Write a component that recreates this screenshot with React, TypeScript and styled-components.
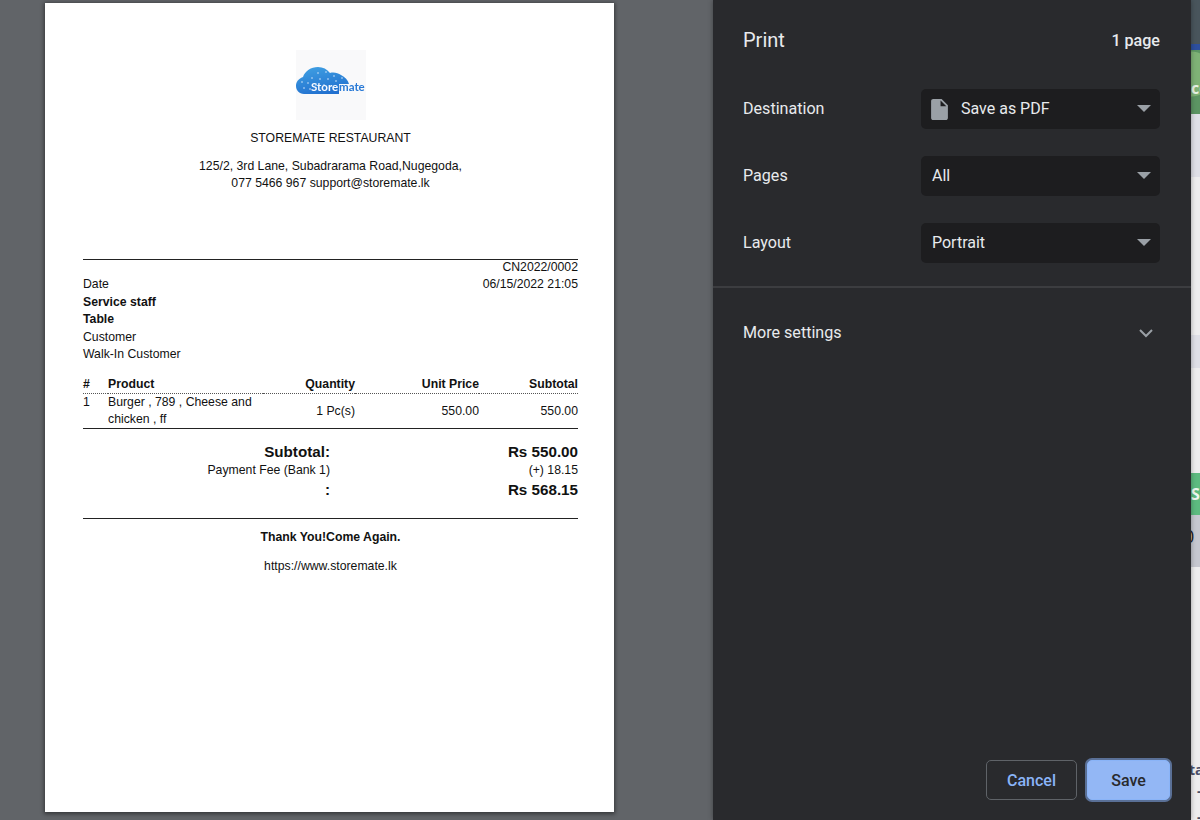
import styled, { createGlobalStyle } from "styled-components"

const GlobalStyle = createGlobalStyle`
  html, body {
    margin: 0;
    padding: 0;
    background: #616468;
  }
`

const Page = styled.div`
  display: flex;
  width: 1200px;
  height: 820px;
  overflow: hidden;
`

/* left side: the sheet preview */
const Preview = styled.div`
  width: 713px;
  flex: none;
  box-sizing: border-box;
  padding: 3px 0 0 45px;
  background: #616468;
`

const Paper = styled.div`
  width: 569px;
  height: 809px;
  box-sizing: border-box;
  padding: 47px 36px 0 38px;
  background: #fff;
  box-shadow: 0 1px 4px 1px rgba(0, 0, 0, 0.45);
  color: #111;
  font: 12.25px/17.5px "Liberation Sans", Arial, sans-serif;
`

const LogoBox = styled.div`
  width: 70px;
  height: 70px;
  margin: 0 auto;
  background: #f9f9fa;
`

const LogoArt = styled.svg`
  display: block;
  filter: blur(0.4px);
`

const Center = styled.div<{ $top: number; $bold?: boolean }>`
  margin-top: ${(p) => p.$top}px;
  text-align: center;
  font-weight: ${(p) => (p.$bold ? 700 : 400)};
`

const Rule = styled.div<{ $top: number }>`
  margin-top: ${(p) => p.$top}px;
  border-top: 1px solid #222;
`

const InfoRow = styled.div<{ $first?: boolean }>`
  display: flex;
  justify-content: space-between;
  line-height: 17.5px;
  margin-top: ${(p) => (p.$first ? "-1px" : "0")};
`

const Strong = styled.span`
  font-weight: 700;
`

const Items = styled.table`
  width: 100%;
  margin-top: 11px;
  border-collapse: collapse;
  table-layout: fixed;
`

const HeadCell = styled.th<{ $w: number; $left?: boolean }>`
  width: ${(p) => p.$w}px;
  padding: 0;
  line-height: 18.5px;
  text-align: ${(p) => (p.$left ? "left" : "right")};
  font-weight: 700;
  border-bottom: 1px dotted #555;
`

const Cell = styled.td<{ $left?: boolean; $top?: boolean }>`
  padding: 0;
  line-height: 17px;
  text-align: ${(p) => (p.$left ? "left" : "right")};
  vertical-align: ${(p) => (p.$top ? "top" : "middle")};
  border-bottom: 1px solid #222;
`

const Totals = styled.div`
  display: grid;
  grid-template-columns: 247px 1fr;
  margin-top: 11.5px;
`

const TotalLabel = styled.div<{ $big?: boolean }>`
  text-align: right;
  font-size: ${(p) => (p.$big ? "15.2px" : "12.25px")};
  font-weight: ${(p) => (p.$big ? 700 : 400)};
  line-height: ${(p) => (p.$big ? "21px" : "17.5px")};
`

const TotalValue = styled(TotalLabel)``

/* middle: the dark print panel */
const Panel = styled.div`
  width: 478px;
  flex: none;
  box-sizing: border-box;
  display: flex;
  flex-direction: column;
  background: #292a2d;
  box-shadow: 0 0 5px rgba(0, 0, 0, 0.35);
  color: #e8eaed;
  font-family: Roboto, "Liberation Sans", sans-serif;
  z-index: 1;
`

const Header = styled.div`
  display: flex;
  align-items: center;
  justify-content: space-between;
  height: 24px;
  margin-top: 28px;
  padding: 0 31px 0 30px;
`

const Title = styled.div`
  font-size: 20px;
  color: #e8eaed;
`

const PageCount = styled.div`
  font-size: 16.1px;
  font-weight: 500;
`

const Settings = styled.div`
  display: flex;
  flex-direction: column;
  gap: 27px;
  margin-top: 37px;
  padding: 0 31px 0 30px;
`

const Row = styled.div`
  display: flex;
  align-items: center;
  justify-content: space-between;
`

const Label = styled.div`
  padding-bottom: 2px;
  font-size: 16.1px;
`

const Select = styled.div`
  display: flex;
  align-items: center;
  width: 239px;
  height: 40px;
  box-sizing: border-box;
  padding: 0 9px 2px 11px;
  border-radius: 5px;
  background: #1d1d1f;
  font-size: 16px;
`

const SelectText = styled.span`
  flex: 1;
`

const FileIcon = styled.svg`
  width: 17px;
  height: 21px;
  margin: 2px 13px 0 -1px;
  fill: #9aa0a6;
`

const Caret = styled.svg`
  width: 14px;
  height: 7px;
  fill: #9aa0a6;
`

const Divider = styled.div`
  margin-top: 23px;
  border-top: 2px solid #3c3d40;
`

const MoreRow = styled(Row)`
  margin-top: 35px;
  padding: 0 38px 0 30px;
`

const Chevron = styled.svg`
  width: 14px;
  height: 9px;
  fill: none;
  stroke: #9aa0a6;
  stroke-width: 2;
`

const Footer = styled.div`
  display: flex;
  justify-content: flex-end;
  gap: 10px;
  margin-top: auto;
  padding: 0 21px 20px 0;
`

const Button = styled.button<{ $primary?: boolean }>`
  width: ${(p) => (p.$primary ? "83px" : "91px")};
  height: 40px;
  padding: 0;
  border: 1px solid ${(p) => (p.$primary ? "#8ab4f8" : "#5f6368")};
  border-radius: 5px;
  background: ${(p) => (p.$primary ? "#93b7f5" : "transparent")};
  box-shadow: ${(p) => (p.$primary ? "0 0 0 2px #5a7096" : "none")};
  color: ${(p) => (p.$primary ? "#292a2d" : "#8ab4f8")};
  font: 500 16px Roboto, "Liberation Sans", sans-serif;
`

/* right edge: sliver of the page behind the dialog */
const Behind = styled.div`
  flex: 1;
  display: flex;
  flex-direction: column;
  overflow: hidden;
  background: #eeeeef;
`

const Band = styled.div<{ $h: number; $bg: string; $nudge?: number }>`
  flex: none;
  box-sizing: border-box;
  height: ${(p) => p.$h}px;
  display: flex;
  align-items: center;
  padding-top: ${(p) => Math.max(p.$nudge ?? 0, 0)}px;
  padding-bottom: ${(p) => Math.max(-(p.$nudge ?? 0), 0)}px;
  background: ${(p) => p.$bg};
`

const BandText = styled.span<{ $shift: number; $color: string; $thin?: boolean }>`
  margin-left: ${(p) => p.$shift}px;
  color: ${(p) => p.$color};
  font: ${(p) => (p.$thin ? "400 18px" : "700 16px")} "Open Sans", "Liberation Sans", sans-serif;
  white-space: nowrap;
`

const Tail = styled.div`
  flex: 1;
  display: flex;
  flex-direction: column;
  padding-top: 192px;
  color: #4a4f68;
  font: 700 14px/21px "Open Sans", "Liberation Sans", sans-serif;
  white-space: nowrap;
`

const TailText = styled.span<{ $shift: number; $below?: number }>`
  margin-left: ${(p) => p.$shift}px;
  margin-bottom: ${(p) => p.$below ?? 0}px;
`

const dots = [
  [22, 23], [30, 22], [38, 26], [46, 28], [16, 28], [24, 29], [32, 29], [40, 31],
  [12, 33], [20, 35], [28, 35], [8, 38], [14, 39], [6, 32],
]

const Logo = () => (
  <LogoArt width="70" height="70" viewBox="0 0 70 70">
    <defs>
      <linearGradient id="cloud" x1="0.2" y1="0" x2="0.6" y2="1">
        <stop offset="0" stopColor="#3f9fe2" />
        <stop offset="1" stopColor="#2270cf" />
      </linearGradient>
    </defs>
    <path
      d="M8 44C3 44 0 40 0 36c0-4 2-7 7-9 2-6 8-10 15-10 5 0 9 2 12 6 4-1 8 0 11 2 4 2 7 5 8 9H43v10H8z"
      fill="url(#cloud)"
    />
    {dots.map(([x, y]) => (
      <circle key={`${x}-${y}`} cx={x} cy={y} r="0.8" fill="#d5e9fb" />
    ))}
    <text x="15" y="41" fontFamily="Lato, sans-serif" fontSize="11.5" fontWeight="700" fill="#f6f9ff">
      Store
    </text>
    <text x="43" y="41" fontFamily="Lato, sans-serif" fontSize="11.5" fontWeight="700" fill="#2a7ad6">
      mate
    </text>
  </LogoArt>
)

const DropCaret = () => (
  <Caret viewBox="0 0 14 7">
    <path d="M0 0h14L7 7z" />
  </Caret>
)

export default function App() {
  return (
    <Page>
      <GlobalStyle />
      <Preview>
        <Paper>
          <LogoBox>
            <Logo />
          </LogoBox>
          <Center $top={10}>STOREMATE RESTAURANT</Center>
          <Center $top={10}>
            125/2, 3rd Lane, Subadrarama Road,Nugegoda,
            <br />
            077 5466 967 support@storemate.lk
          </Center>
          <Rule $top={66} />
          <InfoRow $first>
            <span />
            <span>CN2022/0002</span>
          </InfoRow>
          <InfoRow>
            <span>Date</span>
            <span>06/15/2022 21:05</span>
          </InfoRow>
          <InfoRow><Strong>Service staff</Strong></InfoRow>
          <InfoRow><Strong>Table</Strong></InfoRow>
          <InfoRow>Customer</InfoRow>
          <InfoRow>Walk-In Customer</InfoRow>
          <Items>
            <thead>
              <tr>
                <HeadCell $w={25} $left>#</HeadCell>
                <HeadCell $w={155} $left>Product</HeadCell>
                <HeadCell $w={92}>Quantity</HeadCell>
                <HeadCell $w={124}>Unit Price</HeadCell>
                <HeadCell $w={99}>Subtotal</HeadCell>
              </tr>
            </thead>
            <tbody>
              <tr>
                <Cell $left $top>1</Cell>
                <Cell $left>Burger , 789 , Cheese and chicken , ff</Cell>
                <Cell>1 Pc(s)</Cell>
                <Cell>550.00</Cell>
                <Cell>550.00</Cell>
              </tr>
            </tbody>
          </Items>
          <Totals>
            <TotalLabel $big>Subtotal:</TotalLabel>
            <TotalValue $big>Rs 550.00</TotalValue>
            <TotalLabel>Payment Fee (Bank 1)</TotalLabel>
            <TotalValue>(+) 18.15</TotalValue>
            <TotalLabel $big>:</TotalLabel>
            <TotalValue $big>Rs 568.15</TotalValue>
          </Totals>
          <Rule $top={18} />
          <Center $top={10} $bold>Thank You!Come Again.</Center>
          <Center $top={11}>https://www.storemate.lk</Center>
        </Paper>
      </Preview>

      <Panel>
        <Header>
          <Title>Print</Title>
          <PageCount>1 page</PageCount>
        </Header>
        <Settings>
          <Row>
            <Label>Destination</Label>
            <Select>
              <FileIcon viewBox="4 2 16 20">
                <path d="M6 2c-1.1 0-2 .9-2 2v16c0 1.1.9 2 2 2h12c1.1 0 2-.9 2-2V8l-6-6H6zm7 7V3.5L18.5 9H13z" />
              </FileIcon>
              <SelectText>Save as PDF</SelectText>
              <DropCaret />
            </Select>
          </Row>
          <Row>
            <Label>Pages</Label>
            <Select>
              <SelectText>All</SelectText>
              <DropCaret />
            </Select>
          </Row>
          <Row>
            <Label>Layout</Label>
            <Select>
              <SelectText>Portrait</SelectText>
              <DropCaret />
            </Select>
          </Row>
        </Settings>
        <Divider />
        <MoreRow>
          <Label>More settings</Label>
          <Chevron viewBox="0 0 14 9">
            <path d="M1 1l6 6 6-6" />
          </Chevron>
        </MoreRow>
        <Footer>
          <Button>Cancel</Button>
          <Button $primary>Save</Button>
        </Footer>
      </Panel>

      <Behind>
        <Band $h={44} $bg="#49555c" />
        <Band $h={6} $bg="#2d4f9e" />
        <Band $h={64} $nudge={12} $bg="radial-gradient(circle at 0px 24px, #7fb276 0 22px, #5c9563 23px)">
          <BandText $shift={0} $color="#e8f2e6">co</BandText>
        </Band>
        <Band $h={63} $bg="#dfe0e7" />
        <Band $h={158} $bg="#eeeeef" />
        <Band $h={33} $bg="#dfe0e7" />
        <Band $h={105} $bg="#eeeeef" />
        <Band $h={42} $bg="#5dbb80">
          <BandText $shift={0} $color="#eef8f1">S</BandText>
        </Band>
        <Band $h={52} $nudge={-10} $bg="#c6c8d0">
          <BandText $shift={-7} $color="#222" $thin>0</BandText>
        </Band>
        <Tail>
          <TailText $shift={-2}>ta</TailText>
          <TailText $shift={6} $below={5}>-</TailText>
          <TailText $shift={6}>-</TailText>
        </Tail>
      </Behind>
    </Page>
  )
}
